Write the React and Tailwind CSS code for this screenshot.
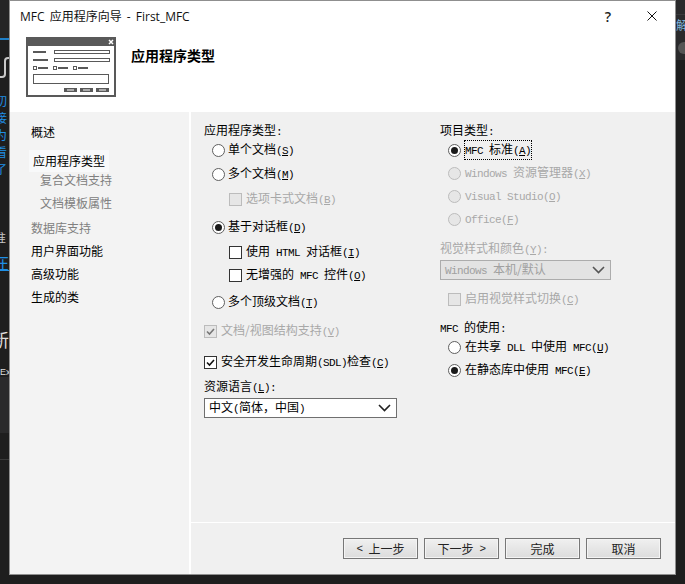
import React from 'react';

// Latin runs in the dialog are a 6px wide bitmap-looking mono
const L = ({ children }) => (
  <span className="font-['Liberation_Mono',monospace] text-[11px] tracking-[-0.6px] whitespace-pre">{children}</span>
);

// "(S)" style mnemonic with the letter underlined
const Key = ({ k }) => (
  <L>(<span className="underline">{k}</span>)</L>
);

// Small window glyph in the wizard header
const WizardIcon = () => (
  <svg width="90" height="60" viewBox="0 0 90 60" className="shrink-0">
    <rect x="0" y="0" width="90" height="60" fill="#595959" />
    <rect x="2" y="9" width="86" height="49" fill="#fff" />
    <path d="M83 3l4 4M87 3l-4 4" stroke="#fff" strokeWidth="1.5" />
    <rect x="7" y="14" width="13" height="2" fill="#595959" />
    <rect x="28.5" y="13.5" width="55" height="3" fill="#fff" stroke="#595959" />
    <rect x="7" y="22" width="15" height="2" fill="#595959" />
    <rect x="28.5" y="21.5" width="55" height="3" fill="#fff" stroke="#595959" />
    <rect x="7.5" y="29.5" width="3" height="3" fill="#fff" stroke="#595959" />
    <rect x="12" y="30" width="10" height="2" fill="#595959" />
    <rect x="27.5" y="29.5" width="3" height="3" fill="#fff" stroke="#595959" />
    <rect x="32" y="30" width="10" height="2" fill="#595959" />
    <rect x="47.5" y="29.5" width="3" height="3" fill="#fff" stroke="#595959" />
    <rect x="52" y="30" width="10" height="2" fill="#595959" />
    <rect x="7.5" y="37.5" width="75" height="9" fill="#fff" stroke="#595959" />
    <rect x="38" y="51" width="13" height="4" fill="#595959" />
    <rect x="54" y="51" width="13" height="4" fill="#595959" />
    <rect x="70" y="51" width="13" height="4" fill="#595959" />
    <rect x="41" y="52.5" width="7" height="1" fill="#fff" />
    <rect x="57" y="52.5" width="7" height="1" fill="#fff" />
    <rect x="73" y="52.5" width="7" height="1" fill="#fff" />
  </svg>
);

const Radio = ({ on, off, children, className = '', focus, gap = 'gap-[3px]' }) => (
  <div className={`flex items-center h-4 ${gap} ${off ? 'text-[#a8a8a8]' : 'text-black'} ${className}`}>
    <span className={`w-[13px] h-[13px] rounded-full border flex items-center justify-center shrink-0 ${off ? 'border-[#bcbcbc] bg-[#e6e6e6]' : 'border-[#5f5f5f] bg-white'}`}>
      {on && <span className="w-[7px] h-[7px] rounded-full bg-[#1a1a1a]" />}
    </span>
    <span className={`whitespace-pre ${focus ? 'outline-1 outline-dotted outline-black' : ''}`}>{children}</span>
  </div>
);

const Check = ({ on, off, children, className = '' }) => (
  <div className={`flex items-center gap-1 h-4 ${off ? 'text-[#a8a8a8]' : 'text-black'} ${className}`}>
    <span className={`w-[13px] h-[13px] border flex items-center justify-center shrink-0 ${off ? 'border-[#bcbcbc] bg-[#e6e6e6]' : 'border-[#333] bg-white'}`}>
      {on && (
        <svg width="9" height="9" viewBox="0 0 9 9">
          <path d="M1 4.5l2.5 2.5L8 2" fill="none" stroke={off ? '#777' : '#111'} strokeWidth="1.6" />
        </svg>
      )}
    </span>
    <span className="whitespace-pre">{children}</span>
  </div>
);

const Select = ({ off, className = '', children }) => (
  <div className={`h-5 border flex items-center justify-between pl-1 pr-[5px] ${off ? 'border-[#acacac] bg-[#e3e3e3] text-[#a0a0a0]' : 'border-[#6f6f6f] bg-white text-black'} ${className}`}>
    <span className="whitespace-pre">{children}</span>
    <svg width="13" height="8" viewBox="0 0 13 8">
      <path d="M1 1l5.5 5.5L12 1" fill="none" stroke={off ? '#555' : '#222'} strokeWidth="1.6" />
    </svg>
  </div>
);

const Btn = ({ children }) => (
  <div className="w-[75px] h-[21px] border border-[#777] bg-gradient-to-b from-[#f0f0f0] to-[#dcdcdc] shadow-[inset_0_0_0_1px_#f4f4f4] flex items-center justify-center text-[12px] text-[#222] whitespace-pre">
    {children}
  </div>
);

const navItems = [
  { label: '概述', cls: 'pl-[21px] text-black' },
  { label: '应用程序类型', active: true },
  { label: '复合文档支持', cls: '-mt-px pl-[30px] text-[#808080]' },
  { label: '文档模板属性', cls: 'mt-[5px] pl-[30px] text-[#808080]' },
  { label: '数据库支持', cls: 'mt-[7px] pl-[21px] text-[#808080]' },
  { label: '用户界面功能', cls: 'mt-[5px] pl-[21px] text-black' },
  { label: '高级功能', cls: 'mt-[5px] pl-[21px] text-black' },
  { label: '生成的类', cls: 'mt-[5px] pl-[21px] text-black' },
];

export default function App() {
  return (
    <div className="w-[685px] h-[584px] bg-[#1e1e1e] flex items-start overflow-hidden font-['Noto_Sans_CJK_SC','Liberation_Sans',sans-serif] text-[12px] leading-4">
      {/* strip of the IDE behind the dialog, left */}
      <div className="w-[9px] h-full shrink-0 relative overflow-hidden text-[#1e8fe6]">
        <div className="absolute left-0 top-0 w-full h-[38px] bg-[#252526]" />
        <div className="absolute left-0 top-[38px] w-full h-[2px] bg-[#1e7fc8]" />
        <svg className="absolute left-0 top-[56px]" width="9" height="24" viewBox="0 0 9 24">
          <path d="M0 21h2c2 0 3-1 3-3V5c0-2 1-3 3-3h1" fill="none" stroke="#c8c8c8" strokeWidth="2" />
        </svg>
        <div className="absolute left-[-5px] top-[92px] text-[12px] leading-[17px]">切<br />接<br />为<br />看<br />了</div>
        <div className="absolute left-[-6px] top-[230px] text-[12px] text-[#c8c8c8]">准</div>
        <div className="absolute left-[-8px] top-[252px] text-[17px] leading-[20px] underline">在</div>
        <div className="absolute left-[-9px] top-[328px] text-[18px] leading-[22px] text-[#ddd]">新</div>
        <div className="absolute left-0 top-[366px] font-['Liberation_Sans',sans-serif] text-[9px] leading-3 text-[#ddd]">Ex</div>
        <div className="absolute left-0 top-[377px] w-full h-[56px] bg-[#2a2a2b]" />
        <div className="absolute left-0 top-[459px] w-full h-px bg-[#3a3a3a]" />
      </div>

      <div className="w-[667px] h-[575px] shrink-0 flex flex-col bg-white border border-[#8f8f8f]">
        <div className="h-[111px] shrink-0 bg-white relative">
          <div className="flex items-center h-[32px] pl-[10px] font-['Open_Sans','Noto_Sans_CJK_SC',sans-serif] text-[12px] text-[#111] [word-spacing:2px]">
            MFC 应用程序向导 - First_MFC
          </div>
          <div className="absolute right-[64px] top-[8px] font-['Open_Sans',sans-serif] text-[14px] font-semibold leading-4 text-[#222]">?</div>
          <svg className="absolute right-[18px] top-[10px]" width="10" height="10" viewBox="0 0 10 10">
            <path d="M.5.5l9 9M9.5.5l-9 9" stroke="#111" />
          </svg>
          <div className="flex items-start pl-[16px] mt-[4px]">
            <WizardIcon />
            <div className="ml-[15px] mt-[10px] text-[14px] font-bold text-black">应用程序类型</div>
          </div>
        </div>

        <div className="flex-1 flex min-h-0">
          <aside className="w-[179px] shrink-0 bg-[#f3f3f3] pt-[11px] flex flex-col">
            {navItems.map((n) =>
              n.active ? (
                <div key={n.label} className="mt-[9px] ml-[19px] w-[80px] h-[22px] pl-1 flex items-center bg-[#f8f9fa] text-black">
                  {n.label}
                </div>
              ) : (
                <div key={n.label} className={`${n.cls} h-[18px] leading-[18px]`}>{n.label}</div>
              )
            )}
          </aside>
          <div className="w-[2px] shrink-0 bg-white" />

          <main className="flex-1 bg-[#f0f0f0] flex flex-col min-w-0">
            <div className="h-[411px] shrink-0 flex border-b border-white">
              <section className="w-[236px] shrink-0 pl-[13px] pt-[10px]">
                <div className="h-4">应用程序类型<L>:</L></div>
                <Radio className="ml-2 mt-1">单个文档<Key k="S" /></Radio>
                <Radio className="ml-2 mt-2">多个文档<Key k="M" /></Radio>
                <Check off className="ml-[25px] mt-[9px]">选项卡式文档<Key k="B" /></Check>
                <Radio on className="ml-2 mt-3">基于对话框<Key k="D" /></Radio>
                <Check className="ml-[25px] mt-[9px]">使用<L> HTML </L>对话框<Key k="I" /></Check>
                <Check className="ml-[25px] mt-[7px]">无增强的<L> MFC </L>控件<Key k="O" /></Check>
                <Radio className="ml-2 mt-[11px]">多个顶级文档<Key k="T" /></Radio>
                <Check on off className="mt-[13px]">文档/视图结构支持<Key k="V" /></Check>
                <Check on className="mt-[15px]">安全开发生命周期<L>(SDL)</L>检查<Key k="C" /></Check>
                <div className="h-4 mt-2">资源语言<Key k="L" /><L>:</L></div>
                <Select className="w-[193px] mt-1">中文<L>(</L>简体，中国<L>)</L></Select>
              </section>

              <section className="flex-1 pl-[13px] pt-[10px]">
                <div className="h-4">项目类型<L>:</L></div>
                <Radio on focus gap="gap-1" className="ml-2 mt-1"><L>MFC </L>标准<Key k="A" /></Radio>
                <Radio off gap="gap-1" className="ml-2 mt-[7px]"><L>Windows </L>资源管理器<Key k="X" /></Radio>
                <Radio off gap="gap-1" className="ml-2 mt-[7px]"><L>Visual Studio</L><Key k="O" /></Radio>
                <Radio off gap="gap-1" className="ml-2 mt-[7px]"><L>Office</L><Key k="F" /></Radio>
                <div className="h-4 mt-[13px] text-[#a8a8a8]">视觉样式和颜色<Key k="Y" /><L>:</L></div>
                <Select off className="w-[171px] mt-1"><L>Windows </L>本机/默认</Select>
                <Check off className="ml-2 mt-[11px]">启用视觉样式切换<Key k="C" /></Check>
                <div className="h-4 mt-3"><L>MFC </L>的使用<L>:</L></div>
                <Radio gap="gap-1" className="ml-2 mt-1">在共享<L> DLL </L>中使用<L> MFC</L><Key k="U" /></Radio>
                <Radio on gap="gap-1" className="ml-2 mt-[7px]">在静态库中使用<L> MFC</L><Key k="E" /></Radio>
              </section>
            </div>
            <div className="flex-1 flex justify-end items-start gap-[6px] pr-[14px] pt-[15px]">
              <Btn><L>{'< '}</L>上一步</Btn>
              <Btn>下一步<L>{' >'}</L></Btn>
              <Btn>完成</Btn>
              <Btn>取消</Btn>
            </div>
          </main>
        </div>
      </div>

      {/* strip of the IDE behind the dialog, right */}
      <div className="w-[9px] h-full shrink-0 relative overflow-hidden text-[#7fb4de]">
        <div className="absolute left-0 top-0 w-full h-[60px] bg-[#2a2a2c]" />
        <div className="absolute left-0 top-[14px] w-full h-px bg-[#3a3a3c]" />
        <div className="absolute left-0 top-[17px] text-[12px]">解</div>
        <div className="absolute left-[2px] top-[42px] w-[12px] h-[12px] rounded-full bg-[#555]" />
      </div>
    </div>
  );
}
